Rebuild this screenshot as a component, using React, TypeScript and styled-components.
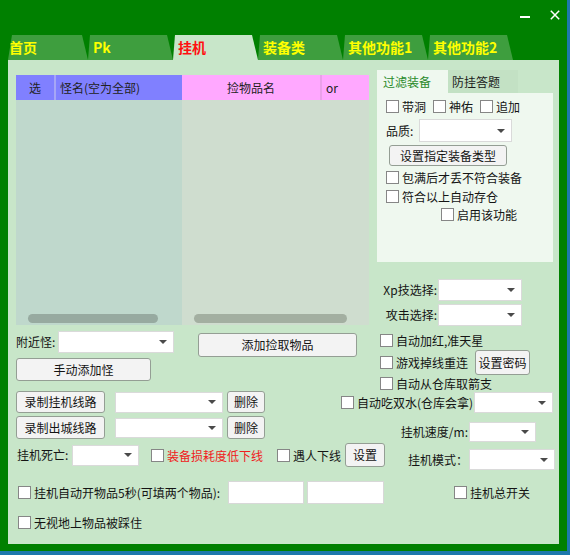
import React from 'react';
import styled, { createGlobalStyle } from 'styled-components';

const FONT = `"Noto Sans CJK SC", "Noto Sans", "Liberation Sans", sans-serif`;

const GlobalStyle = createGlobalStyle`
  html, body { margin: 0; padding: 0; background: #1d78ac; }
  body { font-family: ${FONT}; font-size: 12px; color: #141414; }
  * { box-sizing: border-box; }
`;

const Window = styled.div`
  width: 567px;
  height: 551px;
  background: #008000;
  display: flex;
  flex-direction: column;
`;

const TitleBar = styled.div`
  height: 35px;
  flex: none;
  display: flex;
  justify-content: flex-end;
  align-items: flex-start;
  padding-right: 7px;
`;

const WinIcon = styled.svg<{ $mt: number; $ml?: number }>`
  display: block;
  margin-top: ${(p) => p.$mt}px;
  margin-left: ${(p) => p.$ml ?? 0}px;
`;

const TabStrip = styled.div`
  height: 25px;
  flex: none;
  display: flex;
  padding-left: 8px;
`;

const Tab = styled.div<{ $w: number; $lead: number; $pad: number; $active?: boolean }>`
  width: ${(p) => p.$w}px;
  height: 25px;
  flex: none;
  background: ${(p) => (p.$active ? '#c8e6c9' : '#3e9e3e')};
  clip-path: polygon(${(p) => p.$lead}px 0, calc(100% - 6px) 0, 100% 100%, 0 100%);
  color: ${(p) => (p.$active ? '#ff1010' : '#ffff00')};
  font-weight: bold;
  font-size: 14px;
  line-height: 25px;
  padding-left: ${(p) => p.$pad}px;
  white-space: nowrap;
`;

const Panel = styled.div`
  margin: 0 8px;
  height: 484px;
  flex: none;
  background: #c8e6c9;
  padding: 10px 0 0 8px;
  display: flex;
  flex-direction: column;
`;

const Band = styled.div<{ $h?: number }>`
  display: flex;
  align-items: flex-start;
  flex: none;
  height: ${(p) => (p.$h ? `${p.$h}px` : 'auto')};
`;

const Col = styled.div<{ $w?: number; $ml?: number }>`
  display: flex;
  flex-direction: column;
  align-items: flex-start;
  flex: none;
  width: ${(p) => (p.$w ? `${p.$w}px` : 'auto')};
  margin-left: ${(p) => p.$ml ?? 0}px;
`;

const Row = styled.div<{ $mt?: number; $ml?: number; $w?: number; $top?: boolean }>`
  display: flex;
  align-items: ${(p) => (p.$top ? 'flex-start' : 'center')};
  flex: none;
  margin-top: ${(p) => p.$mt ?? 0}px;
  margin-left: ${(p) => p.$ml ?? 0}px;
  width: ${(p) => (p.$w ? `${p.$w}px` : 'auto')};
`;

const Text = styled.span<{ $w?: number; $right?: boolean; $ml?: number; $lh?: number }>`
  font-size: 12px;
  line-height: ${(p) => p.$lh ?? 16}px;
  white-space: nowrap;
  flex: none;
  width: ${(p) => (p.$w ? `${p.$w}px` : 'auto')};
  text-align: ${(p) => (p.$right ? 'right' : 'left')};
  margin-left: ${(p) => p.$ml ?? 0}px;
`;

const CheckWrap = styled.label<{ $mt?: number; $ml?: number; $color?: string }>`
  display: flex;
  align-items: center;
  gap: 3px;
  flex: none;
  margin-top: ${(p) => p.$mt ?? 0}px;
  margin-left: ${(p) => p.$ml ?? 0}px;
  color: ${(p) => p.$color ?? '#141414'};
  font-size: 12px;
  line-height: 13px;
  white-space: nowrap;
`;

const Box = styled.span`
  width: 13px;
  height: 13px;
  flex: none;
  background: #fff;
  border: 1px solid #868686;
`;

const CheckText = styled.span<{ $w?: number }>`
  width: ${(p) => (p.$w ? `${p.$w}px` : 'auto')};
  flex: none;
`;

const Select = styled.div<{ $w: number; $h: number; $ml?: number; $auto?: boolean }>`
  width: ${(p) => p.$w}px;
  height: ${(p) => p.$h}px;
  flex: none;
  margin-left: ${(p) => (p.$auto ? 'auto' : `${p.$ml ?? 0}px`)};
  background: #fff;
  border: 1px solid #dadada;
  display: flex;
  align-items: center;
  justify-content: flex-end;
  padding-right: 6px;
`;

const Arrow = styled.span`
  width: 0;
  height: 0;
  border-left: 4px solid transparent;
  border-right: 4px solid transparent;
  border-top: 4px solid #4a4a4a;
`;

const Input = styled.div<{ $w: number; $h: number; $ml?: number }>`
  width: ${(p) => p.$w}px;
  height: ${(p) => p.$h}px;
  flex: none;
  margin-left: ${(p) => p.$ml ?? 0}px;
  background: #fff;
  border: 1px solid #d8d8d8;
`;

const Btn = styled.button<{ $w: number; $h: number; $ml?: number; $mt?: number }>`
  width: ${(p) => p.$w}px;
  height: ${(p) => p.$h}px;
  flex: none;
  margin: ${(p) => p.$mt ?? 0}px 0 0 ${(p) => p.$ml ?? 0}px;
  padding: 0;
  background: #f3f3f3;
  border: 1px solid #949e94;
  border-radius: 3px;
  font-family: ${FONT};
  font-size: 12px;
  line-height: 14px;
  color: #141414;
  white-space: nowrap;
`;

/* list views */
const Table = styled.div`
  display: flex;
  margin-top: 5px;
  height: 250px;
`;

const List = styled.div<{ $w: number; $bg: string }>`
  width: ${(p) => p.$w}px;
  background: ${(p) => p.$bg};
  display: flex;
  flex-direction: column;
`;

const HeadRow = styled.div`
  display: flex;
  height: 25px;
  flex: none;
`;

const HeadCell = styled.div<{ $w: number; $bg: string; $sep?: string; $center?: boolean }>`
  width: ${(p) => p.$w}px;
  background: ${(p) => p.$bg};
  border-right: ${(p) => (p.$sep ? `2px solid ${p.$sep}` : 'none')};
  display: flex;
  align-items: center;
  justify-content: ${(p) => (p.$center ? 'center' : 'flex-start')};
  padding-left: ${(p) => (p.$center ? 0 : 4)}px;
  font-size: 12px;
  color: #222;
  white-space: nowrap;
`;

const ListBody = styled.div`
  flex: 1;
  display: flex;
  flex-direction: column;
  justify-content: flex-end;
  padding-bottom: 2px;
`;

const Thumb = styled.div<{ $ml: number; $w: number; $bg: string }>`
  margin-left: ${(p) => p.$ml}px;
  width: ${(p) => p.$w}px;
  height: 9px;
  border-radius: 5px;
  background: ${(p) => p.$bg};
`;

/* inner tab control */
const InnerTabs = styled.div`
  width: 176px;
  height: 192px;
  display: flex;
  flex-direction: column;
`;

const InnerHead = styled.div`
  display: flex;
  height: 23px;
  flex: none;
`;

const InnerTab = styled.div<{ $w: number; $active?: boolean }>`
  width: ${(p) => p.$w}px;
  background: ${(p) => (p.$active ? '#eff8ef' : '#c3e1c4')};
  color: ${(p) => (p.$active ? '#2a8a2a' : '#1a1a1a')};
  font-size: 12px;
  line-height: 23px;
  padding-left: ${(p) => (p.$active ? 6 : 4)}px;
  white-space: nowrap;
`;

const Pane = styled.div`
  flex: 1;
  background: #eff8ef;
  padding: 7px 0 0 9px;
  display: flex;
  flex-direction: column;
  align-items: flex-start;
`;

const Check: React.FC<{ label: string; mt?: number; ml?: number; color?: string; tw?: number }> = ({
  label,
  mt,
  ml,
  color,
  tw,
}) => (
  <CheckWrap $mt={mt} $ml={ml} $color={color}>
    <Box />
    <CheckText $w={tw}>{label}</CheckText>
  </CheckWrap>
);

const Combo: React.FC<{ w: number; h: number; ml?: number; auto?: boolean }> = ({ w, h, ml, auto }) => (
  <Select $w={w} $h={h} $ml={ml} $auto={auto}>
    <Arrow />
  </Select>
);

const tabs = ['首页', 'Pk', '挂机', '装备类', '其他功能1', '其他功能2'];

export default function App() {
  return (
    <>
      <GlobalStyle />
      <Window>
        <TitleBar>
          <WinIcon $mt={16} width="10" height="2" viewBox="0 0 10 2">
            <rect x="0" y="0" width="10" height="2" fill="#fff" />
          </WinIcon>
          <WinIcon $mt={10} $ml={20} width="10" height="10" viewBox="0 0 10 10">
            <path d="M0.8 0.8 L9.2 9.2 M9.2 0.8 L0.8 9.2" stroke="#fff" strokeWidth="1.5" />
          </WinIcon>
        </TitleBar>
        <TabStrip>
          {tabs.map((t, i) => (
            <Tab key={t} $w={i === 0 ? 80 : 85} $lead={i === 0 ? 4 : 2} $pad={i === 0 ? 1 : 5} $active={i === 2}>
              {t}
            </Tab>
          ))}
        </TabStrip>
        <Panel>
          {/* Band A */}
          <Band $h={256}>
            <Col $w={353}>
              <Table>
                <List $w={166} $bg="#bfd8cc">
                  <HeadRow>
                    <HeadCell $w={40} $bg="#8080ff" $sep="#a6a6f6" $center>
                      选
                    </HeadCell>
                    <HeadCell $w={126} $bg="#8080ff">
                      怪名(空为全部)
                    </HeadCell>
                  </HeadRow>
                  <ListBody>
                    <Thumb $ml={12} $w={130} $bg="#97aaa0" />
                  </ListBody>
                </List>
                <List $w={187} $bg="#cfddcf">
                  <HeadRow>
                    <HeadCell $w={140} $bg="#ffa8ff" $sep="#eaa0ea" $center>
                      捡物品名
                    </HeadCell>
                    <HeadCell $w={47} $bg="#ffa8ff">
                      or
                    </HeadCell>
                  </HeadRow>
                  <ListBody>
                    <Thumb $ml={12} $w={153} $bg="#a3afa1" />
                  </ListBody>
                </List>
              </Table>
            </Col>
            <Col $w={176} $ml={8}>
              <InnerTabs>
                <InnerHead>
                  <InnerTab $w={71} $active>
                    过滤装备
                  </InnerTab>
                  <InnerTab $w={70}>防挂答题</InnerTab>
                </InnerHead>
                <Pane>
                  <Row>
                    <Check label="带洞" />
                    <Check label="神佑" ml={7} />
                    <Check label="追加" ml={7} />
                  </Row>
                  <Row $mt={6}>
                    <Text $w={33}>品质:</Text>
                    <Combo w={93} h={23} />
                  </Row>
                  <Btn $w={118} $h={21} $mt={3} $ml={3}>
                    设置指定装备类型
                  </Btn>
                  <Check label="包满后才丢不符合装备" mt={5} />
                  <Check label="符合以上自动存仓" mt={6} />
                  <Check label="启用该功能" mt={5} ml={55} />
                </Pane>
              </InnerTabs>
              <Row $mt={17}>
                <Text $w={60} $right>
                  Xp技选择:
                </Text>
                <Combo w={84} h={22} ml={1} />
              </Row>
              <Row $mt={3}>
                <Text $w={60} $right>
                  攻击选择:
                </Text>
                <Combo w={84} h={22} ml={1} />
              </Row>
            </Col>
          </Band>

          {/* Band B */}
          <Band $h={63}>
            <Col $w={364}>
              <Row $mt={5} $top>
                <Text $w={42} $lh={22}>
                  附近怪:
                </Text>
                <Combo w={116} h={22} />
                <Btn $w={159} $h={24} $ml={24} $mt={2}>
                  添加捡取物品
                </Btn>
              </Row>
              <Btn $w={135} $h={23} $mt={1}>
                手动添加怪
              </Btn>
            </Col>
            <Col>
              <Check label="自动加红,准天星" mt={8} />
              <Row $mt={3}>
                <Check label="游戏掉线重连" tw={72} />
                <Btn $w={55} $h={25} $ml={7}>
                  设置密码
                </Btn>
              </Row>
              <Check label="自动从仓库取箭支" mt={2} />
            </Col>
          </Band>

          {/* Band C */}
          <Band $h={53}>
            <Col $w={325}>
              <Row $mt={2}>
                <Btn $w={89} $h={22}>
                  录制挂机线路
                </Btn>
                <Combo w={108} h={21} ml={10} />
                <Btn $w={38} $h={22} $ml={4}>
                  删除
                </Btn>
              </Row>
              <Row $mt={3}>
                <Btn $w={89} $h={23}>
                  录制出城线路
                </Btn>
                <Combo w={108} h={20} ml={10} />
                <Btn $w={38} $h={23} $ml={4}>
                  删除
                </Btn>
              </Row>
            </Col>
            <Col>
              <Row $mt={3} $w={212}>
                <Check label="自动吃双水(仓库会拿)" />
                <Combo w={79} h={21} auto />
              </Row>
              <Row $mt={9}>
                <Text $w={127} $right>
                  挂机速度/m:
                </Text>
                <Combo w={67} h={20} ml={1} />
              </Row>
            </Col>
          </Band>

          {/* Band D */}
          <Band $h={28}>
            <Col $w={392}>
              <Row $mt={1}>
                <Text $w={55} $ml={1}>
                  挂机死亡:
                </Text>
                <Combo w={67} h={21} />
                <Check label="装备损耗度低下线" ml={12} color="#f02020" tw={96} />
                <Check label="遇人下线" ml={14} tw={48} />
                <Btn $w={40} $h={24} $ml={4}>
                  设置
                </Btn>
              </Row>
            </Col>
            <Col>
              <Row $mt={7}>
                <Text $w={60}>挂机模式：</Text>
                <Combo w={86} h={21} ml={1} />
              </Row>
            </Col>
          </Band>

          {/* Band E */}
          <Band $h={34}>
            <Col $w={438}>
              <Row $mt={11}>
                <Check label="挂机自动开物品5秒(可填两个物品):" ml={2} tw={194} />
                <Input $w={76} $h={23} />
                <Input $w={77} $h={23} $ml={3} />
              </Row>
            </Col>
            <Col>
              <Check label="挂机总开关" mt={16} />
            </Col>
          </Band>

          {/* Band F */}
          <Band>
            <Check label="无视地上物品被踩住" mt={12} ml={2} />
          </Band>
        </Panel>
      </Window>
    </>
  );
}
